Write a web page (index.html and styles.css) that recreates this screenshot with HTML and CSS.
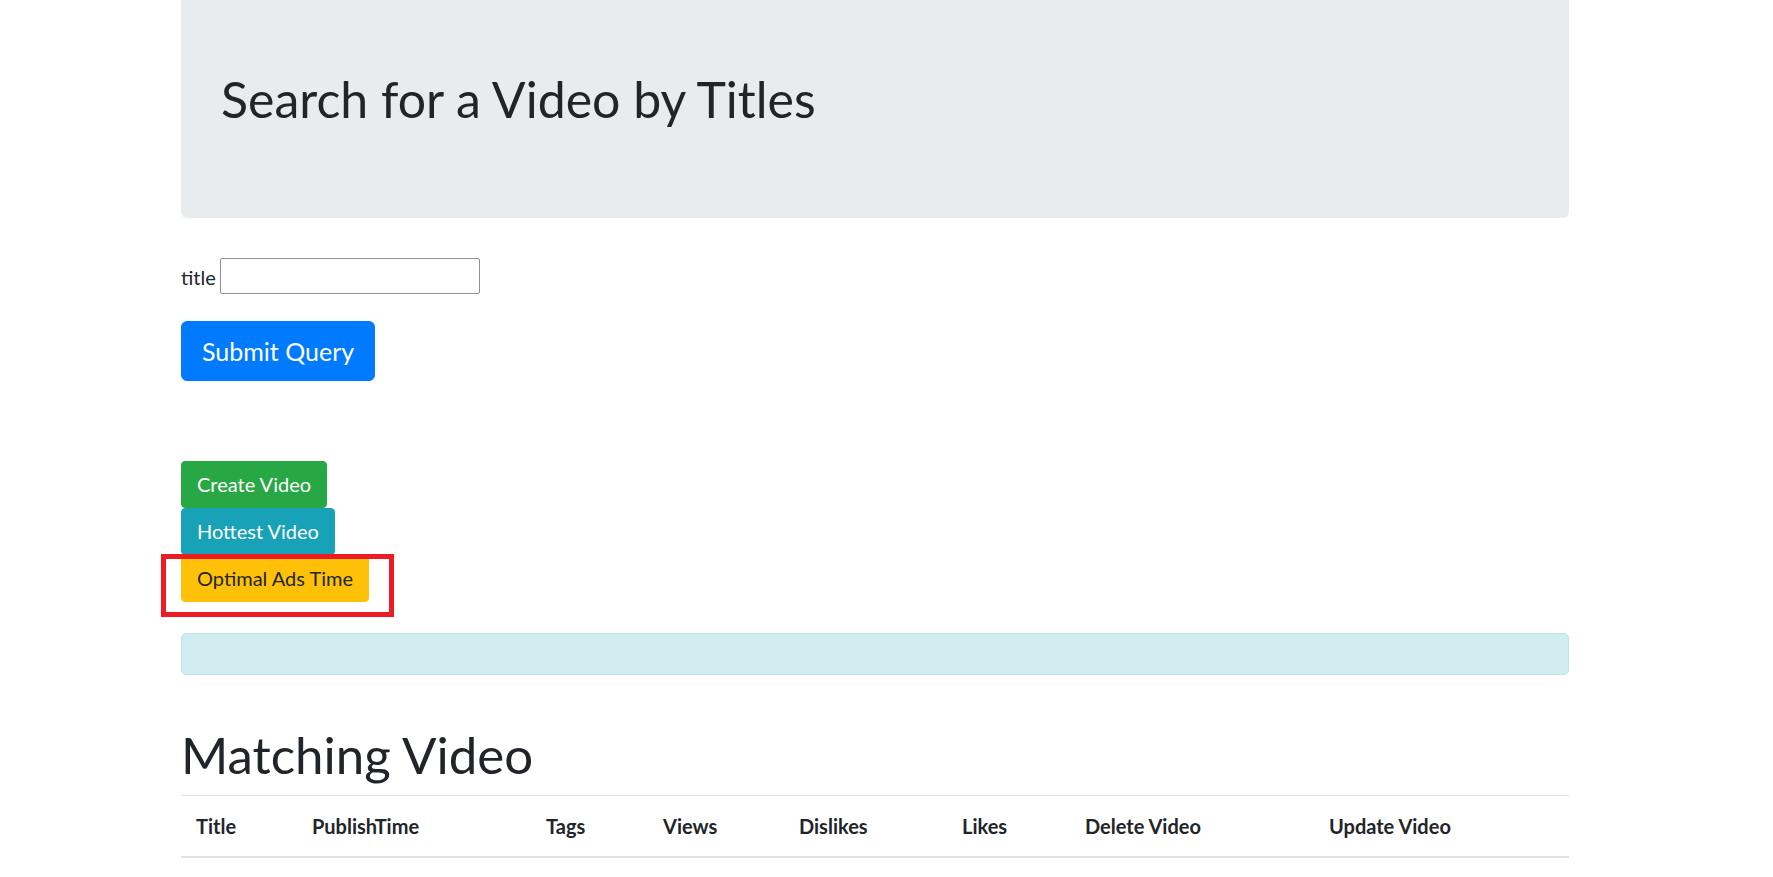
FILE: index.html
```html
<!DOCTYPE html>
<html lang="en">
<head>
<meta charset="utf-8">
<title>Search for a Video by Titles</title>
<link rel="stylesheet" href="styles.css">
</head>
<body>
<div class="container">
  <div class="jumbotron">
    <h1 class="display">Search for a Video by Titles</h1>
  </div>
  <form class="search">
    <div class="field"><label for="title">title</label><input id="title" type="text"></div>
    <button type="button" class="btn btn-lg btn-primary">Submit Query</button>
  </form>
  <div class="actions">
    <button type="button" class="btn btn-success">Create Video</button>
    <button type="button" class="btn btn-info">Hottest Video</button>
    <div class="highlight">
      <button type="button" class="btn btn-warning">Optimal Ads Time</button>
      <span class="mark"></span>
    </div>
  </div>
  <div class="alert"></div>
  <h1 class="section">Matching Video</h1>
  <table class="table">
    <thead>
      <tr>
        <th class="c1">Title</th>
        <th class="c2">PublishTime</th>
        <th class="c3">Tags</th>
        <th class="c4">Views</th>
        <th class="c5">Dislikes</th>
        <th class="c6">Likes</th>
        <th class="c7">Delete Video</th>
        <th class="c8">Update Video</th>
      </tr>
    </thead>
  </table>
</div>
</body>
</html>
```

FILE: styles.css
```css
* { box-sizing: border-box; }
html, body { margin: 0; padding: 0; background: #fff; }
body {
  font-family: Lato, "Open Sans", sans-serif;
  font-size: 20px;
  line-height: 30px;
  color: #212529;
}
.container {
  width: 1388px;
  margin-left: 181px;
  display: flex;
  flex-direction: column;
  align-items: flex-start;
}
.jumbotron {
  width: 100%;
  height: 218px;
  background: #e9ecef;
  border-radius: 0 0 6px 6px;
  padding: 69px 40px 0;
}
h1 {
  margin: 0;
  font-size: 50px;
  line-height: 60px;
  font-weight: 400;
}
.search {
  margin-top: 40px;
  display: flex;
  flex-direction: column;
  align-items: flex-start;
}
.field {
  display: flex;
  align-items: center;
  height: 36px;
}
.field label { margin-right: 4px; padding-top: 2px; }
.field input {
  width: 260px;
  height: 36px;
  border: 1px solid #8f8f9d;
  border-radius: 2px;
  font: inherit;
  padding: 1px 2px;
}
.btn {
  font-family: inherit;
  font-size: 20px;
  line-height: 31px;
  padding: 7px 15px;
  border: 1px solid transparent;
  border-radius: 4px;
  color: #fff;
  cursor: pointer;
}
.btn-lg {
  font-size: 25px;
  line-height: 38px;
  padding: 10px 20px;
  border-radius: 6px;
}
.search .btn { margin-top: 27px; }
.btn-primary { background: #007bff; border-color: #007bff; }
.btn-success { background: #28a745; border-color: #28a745; }
.btn-info { background: #17a2b8; border-color: #17a2b8; }
.btn-warning { background: #ffc107; border-color: #ffc107; color: #212529; }
.actions {
  margin-top: 80px;
  display: flex;
  flex-direction: column;
  align-items: flex-start;
}
.highlight { position: relative; }
.mark {
  position: absolute;
  left: -20px;
  top: -1px;
  width: 233px;
  height: 63px;
  border: 5px solid #ed1c24;
  pointer-events: none;
}
.alert {
  margin-top: 31px;
  width: 100%;
  height: 42px;
  background: #d1ecf1;
  border: 1px solid #bee5eb;
  border-radius: 5px;
}
.section { margin-top: 50px; margin-bottom: 10px; font-size: 51px; }
.table {
  width: 1388px;
  border-collapse: collapse;
  table-layout: fixed;
}
.table th {
  text-align: left;
  font-weight: 700;
  padding: 15px;
  line-height: 30px;
  border-top: 1px solid #dee2e6;
  border-bottom: 2px solid #dee2e6;
  white-space: nowrap;
}
.c1 { width: 116px; }
.c2 { width: 234px; }
.c3 { width: 117px; }
.c4 { width: 136px; }
.c5 { width: 163px; }
.c6 { width: 123px; }
.c7 { width: 244px; }
.c8 { width: 255px; }
```
